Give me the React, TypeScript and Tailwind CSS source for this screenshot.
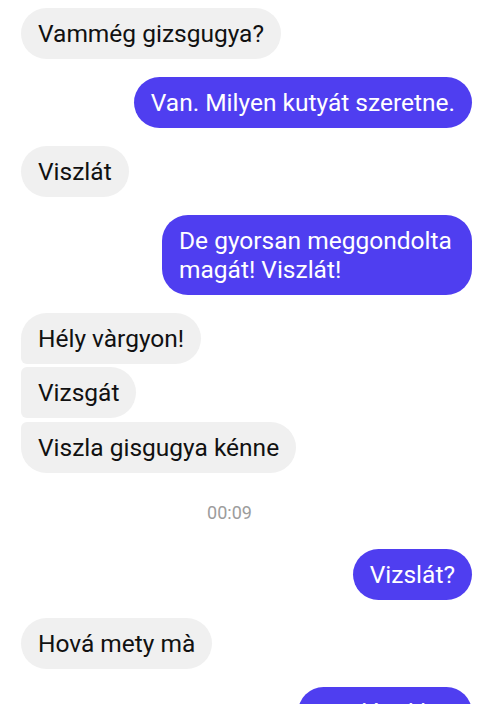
import React from 'react';

type Msg = {
  text: string;
  out?: boolean;
  gap: string;
  shape?: string;
  wrap?: boolean;
};

const MESSAGES: Msg[] = [
  { text: 'Vammég gizsgugya?', gap: 'mt-0' },
  { text: 'Van. Milyen kutyát szeretne.', out: true, gap: 'mt-[18px]' },
  { text: 'Viszlát', gap: 'mt-[18px]' },
  { text: 'De gyorsan meggondolta magát! Viszlát!', out: true, wrap: true, gap: 'mt-[18px]' },
  { text: 'Hély vàrgyon!', gap: 'mt-[18px]', shape: 'rounded-[26px] rounded-bl-[6px]' },
  { text: 'Vizsgát', gap: 'mt-[3px]', shape: 'rounded-[26px] rounded-l-[6px]' },
  { text: 'Viszla gisgugya kénne', gap: 'mt-[4px]', shape: 'rounded-[26px] rounded-tl-[6px]' },
];

const MORE: Msg[] = [
  { text: 'Vizslát?', out: true, gap: 'mt-0' },
  { text: 'Hová mety mà', gap: 'mt-[18px]' },
  { text: 'Vizslát akkor', out: true, gap: 'mt-[18px]' },
];

function Bubble({ m }: { m: Msg }) {
  return (
    <div className={`flex ${m.out ? 'justify-end' : 'justify-start'} ${m.gap}`}>
      <div
        className={`${m.shape ?? 'rounded-[26px]'} px-[17px] py-[11px] text-[24.5px] leading-[29px] ${
          m.wrap ? 'max-w-[310px]' : 'whitespace-nowrap'
        } ${m.out ? 'bg-[#4f3ef0] text-white' : 'bg-[#f0f0f0] text-[#111111]'}`}
      >
        {m.text}
      </div>
    </div>
  );
}

export default function App() {
  return (
    <div
      className="w-[486px] h-[704px] overflow-hidden bg-white pt-[8px] pl-[21px] pr-[14px]"
      style={{ fontFamily: 'Roboto, "Noto Sans", sans-serif' }}
    >
      {MESSAGES.map((m, i) => (
        <Bubble key={i} m={m} />
      ))}

      {/* time separator */}
      <div className="flex justify-center pr-[34px] mt-[28px] mb-[24px] text-[18px] leading-[24px] text-[#9c9c9c]">
        00:09
      </div>

      {MORE.map((m, i) => (
        <Bubble key={i} m={m} />
      ))}
    </div>
  );
}
